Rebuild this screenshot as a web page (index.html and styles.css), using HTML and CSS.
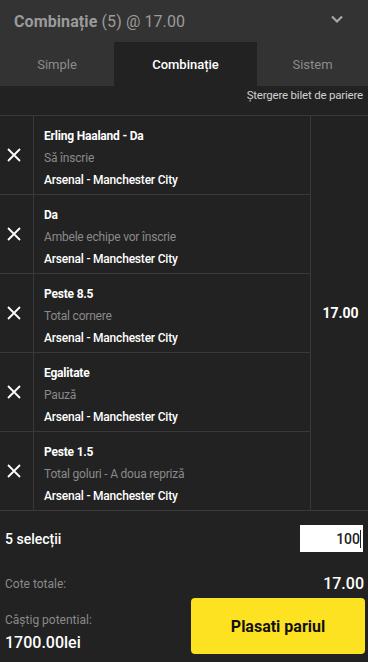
FILE: index.html
```html
<!DOCTYPE html>
<html lang="ro">
<head>
<meta charset="utf-8">
<link rel="stylesheet" href="styles.css">
</head>
<body>
<div class="slip">
  <div class="header">
    <div class="title"><b>Combinație</b> (5) @ 17.00</div>
    <svg class="chevron" width="14" height="10" viewBox="0 0 14 10"><path d="M2 2.5 L7 7.5 L12 2.5" fill="none" stroke="#a8a8a8" stroke-width="2.2"/></svg>
  </div>
  <div class="tabs">
    <div class="tab">Simple</div>
    <div class="tab active">Combinație</div>
    <div class="tab">Sistem</div>
  </div>
  <div class="clear">Ștergere bilet de pariere</div>
  <div class="list">
    <div class="rows">
      <div class="row">
        <div class="remove"><svg width="14" height="14" viewBox="0 0 14 14"><path d="M1 1 L13 13 M13 1 L1 13" stroke="#fff" stroke-width="1.8"/></svg></div>
        <div class="info"><div class="pick">Erling Haaland - Da</div><div class="market">Să înscrie</div><div class="match">Arsenal - Manchester City</div></div>
      </div>
      <div class="row">
        <div class="remove"><svg width="14" height="14" viewBox="0 0 14 14"><path d="M1 1 L13 13 M13 1 L1 13" stroke="#fff" stroke-width="1.8"/></svg></div>
        <div class="info"><div class="pick">Da</div><div class="market">Ambele echipe vor înscrie</div><div class="match">Arsenal - Manchester City</div></div>
      </div>
      <div class="row">
        <div class="remove"><svg width="14" height="14" viewBox="0 0 14 14"><path d="M1 1 L13 13 M13 1 L1 13" stroke="#fff" stroke-width="1.8"/></svg></div>
        <div class="info"><div class="pick">Peste 8.5</div><div class="market">Total cornere</div><div class="match">Arsenal - Manchester City</div></div>
      </div>
      <div class="row">
        <div class="remove"><svg width="14" height="14" viewBox="0 0 14 14"><path d="M1 1 L13 13 M13 1 L1 13" stroke="#fff" stroke-width="1.8"/></svg></div>
        <div class="info"><div class="pick">Egalitate</div><div class="market">Pauză</div><div class="match">Arsenal - Manchester City</div></div>
      </div>
      <div class="row">
        <div class="remove"><svg width="14" height="14" viewBox="0 0 14 14"><path d="M1 1 L13 13 M13 1 L1 13" stroke="#fff" stroke-width="1.8"/></svg></div>
        <div class="info"><div class="pick">Peste 1.5</div><div class="market">Total goluri - A doua repriză</div><div class="match">Arsenal - Manchester City</div></div>
      </div>
    </div>
    <div class="odds">17.00</div>
  </div>
  <div class="stake-row">
    <div class="count">5 selecții</div>
    <div class="stake">100<span class="caret"></span></div>
  </div>
  <div class="total-row">
    <div class="label">Cote totale:</div>
    <div class="total">17.00</div>
  </div>
  <div class="win-row">
    <div class="win">
      <div class="label">Câștig potential:</div>
      <div class="amount">1700.00lei</div>
    </div>
    <button class="place">Plasati pariul</button>
  </div>
</div>
</body>
</html>
```
FILE: styles.css
```css
* { box-sizing: border-box; }
html, body { margin: 0; padding: 0; }
body {
  background: #222222;
  font-family: Roboto, "Liberation Sans", sans-serif;
  color: #fff;
  width: 368px;
  height: 662px;
  overflow: hidden;
}
.slip { display: flex; flex-direction: column; }
.header {
  height: 42px;
  background: #333333;
  display: flex;
  align-items: center;
  justify-content: space-between;
  padding: 0 24px 0 14px;
}
.title { font-size: 16px; color: #9b9b9b; letter-spacing: 0.1px; }
.title b { font-weight: 700; }
.chevron { display: block; margin-top: -4px; }
.tabs {
  display: grid;
  grid-template-columns: 114px 143px 1fr;
  height: 44px;
  background: #333333;
}
.tab {
  display: flex;
  align-items: center;
  justify-content: center;
  font-size: 13px;
  color: #8c8c8c;
}
.tab.active { background: #222222; color: #fff; font-weight: 500; }
.clear {
  height: 29px;
  text-align: right;
  padding: 2px 5px 0 0;
  font-size: 11.5px;
  color: #d0d0d0;
  letter-spacing: -0.2px;
}
.list {
  display: flex;
  border-top: 1px solid #393939;
  border-bottom: 1px solid #393939;
}
.rows { width: 311px; border-right: 1px solid #393939; }
.row {
  display: flex;
  height: 79px;
  border-bottom: 1px solid #393939;
}
.row:last-child { border-bottom: none; height: 78px; }
.remove {
  width: 34px;
  border-right: 1px solid #393939;
  display: flex;
  align-items: center;
  justify-content: center;
  padding-right: 5px;
}
.remove svg { display: block; }
.info {
  padding: 9px 0 0 10px;
  display: flex;
  flex-direction: column;
}
.pick, .market, .match { height: 22px; line-height: 22px; font-size: 12px; letter-spacing: -0.2px; }
.pick { font-weight: 700; color: #fff; }
.market { color: #8a8a8a; }
.match { font-weight: 500; color: #fff; }
.odds {
  flex: 1;
  display: flex;
  align-items: center;
  justify-content: center;
  font-size: 14px;
  font-weight: 700;
  padding-left: 2px;
}
.stake-row {
  display: flex;
  align-items: center;
  justify-content: space-between;
  padding: 14px 5px 0 5px;
}
.count { font-size: 14px; font-weight: 500; }
.stake {
  width: 63px;
  height: 27px;
  background: #fff;
  color: #222;
  font-size: 14px;
  font-weight: 500;
  display: flex;
  align-items: center;
  justify-content: flex-end;
  padding-right: 2px;
}
.caret { width: 1px; height: 18px; background: #222; }
.total-row {
  display: flex;
  align-items: center;
  justify-content: space-between;
  padding: 22px 4px 0 5px;
}
.label { font-size: 12px; color: #8a8a8a; }
.total { font-size: 16px; font-weight: 500; }
.win-row {
  display: flex;
  justify-content: space-between;
  align-items: flex-start;
  padding: 5px 3px 0 5px;
}
.win { padding-top: 15px; display: flex; flex-direction: column; gap: 6px; }
.amount { font-size: 16px; font-weight: 500; }
.place {
  width: 174px;
  height: 56px;
  background: #fde221;
  border: none;
  border-radius: 4px;
  font-family: Roboto, "Liberation Sans", sans-serif;
  font-size: 16px;
  font-weight: 700;
  color: #111;
}
```
